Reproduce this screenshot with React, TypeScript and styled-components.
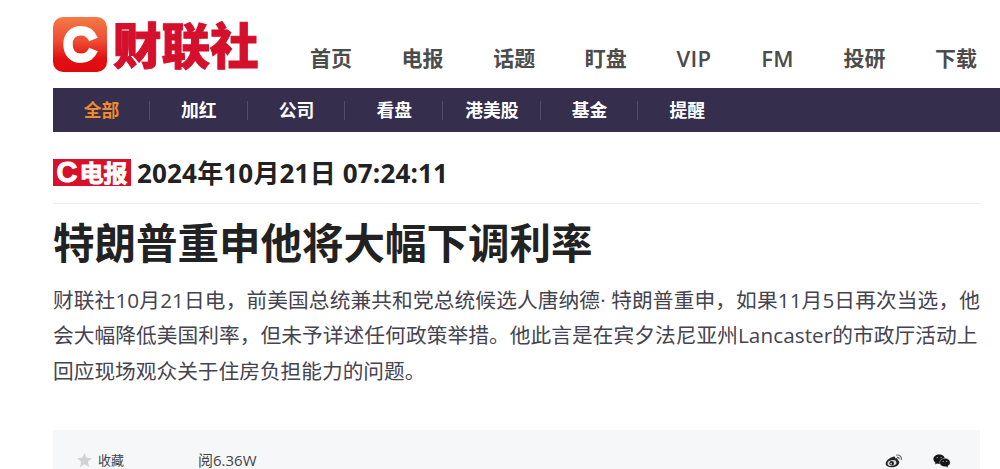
import React from 'react';
import styled, {createGlobalStyle, css} from 'styled-components';

const navItems = ['首页', '电报', '话题', '盯盘', 'VIP', 'FM', '投研', '下载'];

const categories = ['全部', '加红', '公司', '看盘', '港美股', '基金', '提醒'];

const paragraph = [
    {text: '财联社10月21日电，前美国总统兼共和党总统候选人唐纳德· 特朗普重申，如果11月5日再次当选，他', spacing: 0.12},
    {text: '会大幅降低美国利率，但未予详述任何政策举措。他此言是在宾夕法尼亚州Lancaster的市政厅活动上', spacing: 0.07},
    {text: '回应现场观众关于住房负担能力的问题。', spacing: 0},
];

const isLatin = (value: string) => /^[A-Z]+$/.test(value);

const LogoMark: React.FC = () => (
    <svg width="54" height="55" viewBox="0 0 54 55">
        <defs>
            <linearGradient id="logo" x1="0" y1="0" x2="0" y2="1">
                <stop offset="0" stopColor="#f47a45"/>
                <stop offset=".45" stopColor="#ee4a33"/>
                <stop offset=".75" stopColor="#e30f12"/>
                <stop offset="1" stopColor="#df0a10"/>
            </linearGradient>
        </defs>
        <rect width="54" height="55" rx="10" fill="url(#logo)"/>
        <path d="M40.5 22.5C37.5 15.5 33.2 13.8 28 13.8C20 13.8 15 19.3 15 27.5C15 35.7 20 41.2 28 41.2C33.2 41.2 37.5 39.5 40.5 32.5" fill="none" stroke="#fff" strokeWidth="9.4"/>
    </svg>
);

const WeiboIcon: React.FC = () => (
    <svg width="18" height="14" viewBox="0 0 18 14">
        <path d="M7 3.2C9 2 10.5 2.6 10.2 4.4C12.5 4 13 5 12.6 6.2C15 7 14.6 9.6 12.8 11.2C9.6 14 3 13.8 1 11C-.6 8.5 3.5 4 7 3.2Z" fill="#222"/>
        <ellipse cx="7" cy="9" rx="4.5" ry="2.9" transform="rotate(-8 7 9)" fill="#dcdde0"/>
        <circle cx="6.7" cy="9.2" r="2.3" fill="#222"/>
        <circle cx="6.1" cy="9.7" r=".8" fill="#fff"/>
        <path d="M11.2 1.2C14.5.4 17.2 2.8 16.2 6M11.8 3.4C13.4 3.1 14.5 4 14 5.4" fill="none" stroke="#666" strokeWidth="1.1"/>
    </svg>
);

const WechatIcon: React.FC = () => (
    <svg width="18" height="14" viewBox="0 0 18 14">
        <path d="M6.2.4C2.8.4.4 2.5.4 5.1C.4 6.6 1.2 7.9 2.5 8.8L2 10.6L4.1 9.6L6.4 9.9C11 9.5 12 7 11.9 5C11.8 2.4 9.5.4 6.2.4Z" fill="#161616"/>
        <path d="M12 4.3C9 4.3 6.7 6.2 6.7 8.6C6.7 11.3 9.6 13.2 13.2 12.7L15.2 13.7L14.8 12.1C16.4 11.3 17.2 10 17.2 8.6C17.2 6.2 15 4.3 12 4.3Z" fill="#161616" stroke="#f6f7f9" strokeWidth=".4"/>
        <g fill="#aaa">
            <circle cx="4.3" cy="3.6" r=".7"/>
            <circle cx="8.1" cy="3.6" r=".7"/>
            <circle cx="10.3" cy="7.4" r=".6"/>
            <circle cx="13.8" cy="7.4" r=".6"/>
        </g>
    </svg>
);

const App: React.FC = () => (
    <Page>
        <GlobalStyle/>

        <Header>
            <Logo>
                <LogoMark/>
                <LogoText>财联社</LogoText>
            </Logo>
            <Nav>
                {navItems.map(item => <NavItem key={item} $latin={isLatin(item)}>{item}</NavItem>)}
            </Nav>
        </Header>

        <Categories>
            {categories.map((item, index) => (
                <Category key={item} $active={index === 0}>{item}</Category>
            ))}
        </Categories>

        <Article>
            <Meta>
                <Badge>
                    <BadgeLetter>C</BadgeLetter>
                    <BadgeText>电报</BadgeText>
                </Badge>
                <DateTime>2024年10月21日 07:24:11</DateTime>
            </Meta>

            <Title>特朗普重申他将大幅下调利率</Title>

            <Text>
                {paragraph.map(line => (
                    <Line key={line.text} $spacing={line.spacing}>{line.text}</Line>
                ))}
            </Text>

            <Footer>
                <Favorite>
                    <svg width="15" height="14" viewBox="0 0 15 14">
                        <path d="M7.5 0L9.6 4.8L15 5.3L10.9 8.8L12.1 14L7.5 11.3L2.9 14L4.1 8.8L0 5.3L5.4 4.8Z" fill="#d3d3d5"/>
                    </svg>
                    收藏
                </Favorite>
                <Views>阅6.36W</Views>
                <Share>
                    <WeiboIcon/>
                    <WechatIcon/>
                </Share>
            </Footer>
        </Article>
    </Page>
);

export default App;

const GlobalStyle = createGlobalStyle`
    * {
        box-sizing: border-box;
        margin: 0;
        padding: 0;
    }

    body {
        background: #fff;
        font-family: "Open Sans", "Noto Sans CJK SC", sans-serif;
        overflow: hidden;
    }

    svg {
        display: block;
        flex-shrink: 0;
    }
`;

const Page = styled.div`
    height: 469px;
    padding-left: 53px;
    overflow: hidden;
`;

const Header = styled.header`
    display: flex;
    height: 88px;
    padding-top: 17px;
`;

const Logo = styled.div`
    display: flex;
    gap: 6px;
    width: 257px;
    height: 55px;
`;

const LogoText = styled.span`
    color: #d4102c;
    font: 900 48.5px/54px "Noto Sans CJK SC", sans-serif;
    -webkit-text-stroke: 1px #d4102c;
    white-space: nowrap;
    transform: translateY(-1.5px);
`;

const Nav = styled.nav`
    display: flex;
    gap: 49.6px;
    padding-top: 26px;
`;

const NavItem = styled.a<{ $latin: boolean }>`
    color: #4c4c4c;
    font-size: ${props => props.$latin ? 22 : 21}px;
    font-weight: ${props => props.$latin ? 600 : 700};
    letter-spacing: ${props => props.$latin ? '.4px' : 0};
    line-height: 30px;
    white-space: nowrap;
`;

const Categories = styled.div`
    display: flex;
    height: 44px;
    background: #352f4d;
`;

const Category = styled.a<{ $active: boolean }>`
    width: 97.7px;
    color: #fff;
    font-size: 17.8px;
    font-weight: bold;
    line-height: 45px;
    text-align: center;
    white-space: nowrap;

    &:first-child {
        width: 97px;
    }

    &:not(:last-child) {
        background: linear-gradient(#524d68, #524d68) no-repeat right 13px / 1px 19px;
    }

    ${props => props.$active && css`
        color: #f08a2c;
    `}
`;

const Article = styled.article`
    width: 927px;
`;

const Meta = styled.div`
    display: flex;
    align-items: center;
    gap: 6px;
    height: 72px;
    padding-top: 10px;
    border-bottom: 1px solid #ececec;
`;

const Badge = styled.span`
    display: flex;
    align-items: center;
    justify-content: center;
    width: 78px;
    height: 27px;
    background: #d8102a;
    color: #fff;
    font-weight: bold;
    line-height: 27px;
    white-space: nowrap;
`;

const BadgeLetter = styled.span`
    font-family: "Liberation Sans", sans-serif;
    font-size: 29px;
    -webkit-text-stroke: 1px #fff;
`;

const BadgeText = styled.span`
    margin-top: -3px;
    margin-left: 2px;
    font-family: "Noto Sans CJK SC", sans-serif;
    font-size: 24px;
    -webkit-text-stroke: .8px #fff;
`;

const DateTime = styled.time`
    color: #222;
    font-size: 26px;
    font-weight: bold;
    letter-spacing: .17px;
    line-height: 36px;
    white-space: nowrap;
`;

const Title = styled.h1`
    margin-top: 9px;
    color: #222;
    font-size: 41.5px;
    font-weight: bold;
    line-height: 60px;
    white-space: nowrap;
`;

const Text = styled.div`
    margin-top: 10px;
    color: #45434f;
    font-size: 20.7px;
    line-height: 35.3px;
`;

const Line = styled.p<{ $spacing: number }>`
    letter-spacing: ${props => props.$spacing}px;
    white-space: nowrap;
`;

const Footer = styled.footer`
    display: flex;
    align-items: center;
    height: 62px;
    margin-top: 41px;
    padding: 0 29px 2px 24px;
    background: #f6f7f9;
    color: #444;
`;

const Favorite = styled.span`
    display: flex;
    align-items: center;
    gap: 6px;
    width: 121px;
    font-size: 13px;
`;

const Views = styled.span`
    font-size: 15px;
`;

const Share = styled.div`
    display: flex;
    gap: 30px;
    margin-left: auto;
    padding-top: 2px;
`;
